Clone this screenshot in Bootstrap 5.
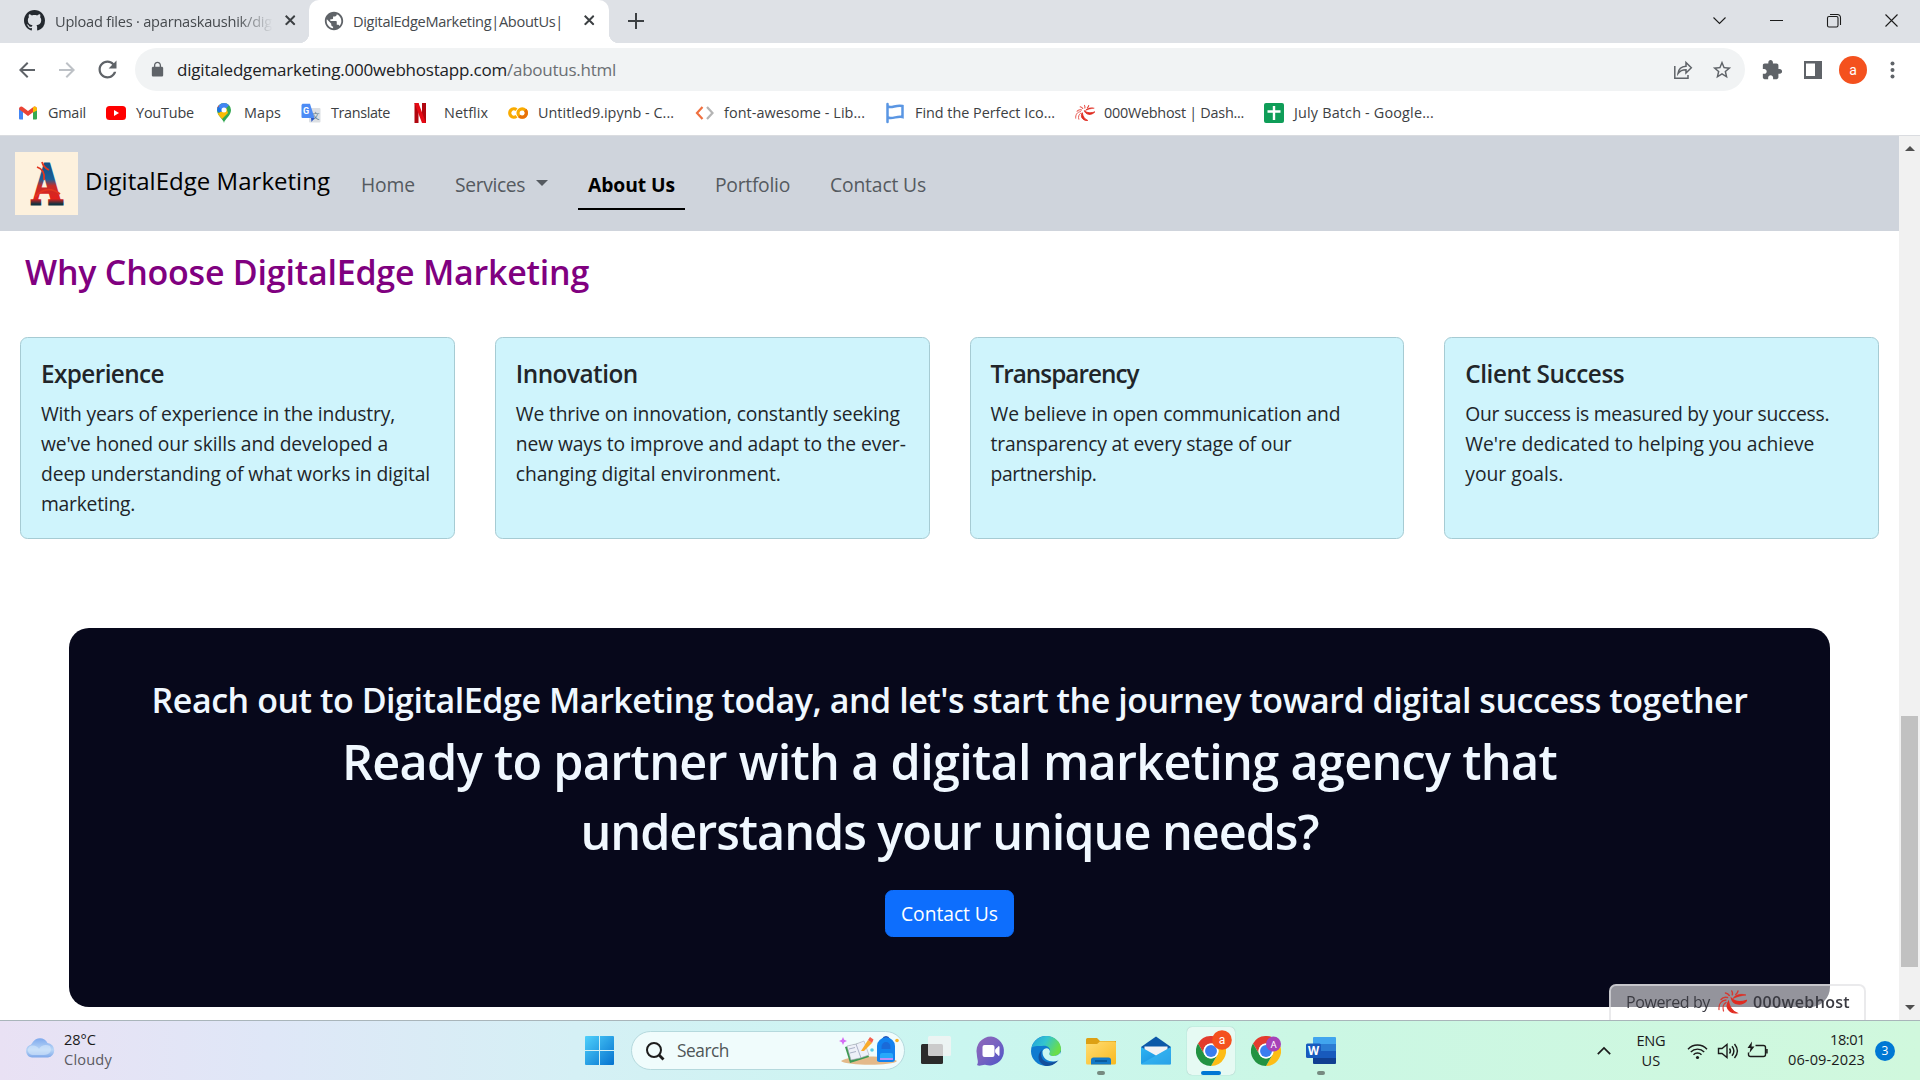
<!DOCTYPE html>
<html lang="en">
<head>
<meta charset="utf-8">
<title>DigitalEdgeMarketing|AboutUs|</title>
<link href="https://cdn.jsdelivr.net/npm/bootstrap@5.3.0/dist/css/bootstrap.min.css" rel="stylesheet">
<style>
html{height:100%;overflow:hidden}
body{height:1080px;width:1920px;font-family:"Open Sans","Noto Sans",sans-serif;font-size:19.3px;line-height:30px;color:#212529;overflow:hidden;background:#fff}
svg{display:block;flex:none;overflow:visible}
[data-fit]{display:inline-block;white-space:nowrap;flex:none}
/* browser window */
.tabstrip{height:43px;background:#dee1e6;font-size:14.6px;color:#45494d;line-height:20px}
.tabstrip>div{padding-bottom:2px}
.tab-idle{width:309px;padding-left:24px}
.tab-idle .tab-label{width:228px;padding-left:10px;-webkit-mask-image:linear-gradient(90deg,#000 84%,transparent)}
.tab-live{width:300px;background:#fff;border-radius:10px 10px 0 0;padding-left:14px;position:relative}
.tab-live::before,.tab-live::after{content:"";position:absolute;bottom:0;width:10px;height:10px}
.tab-live::before{left:-10px;background:radial-gradient(circle at 0 0,transparent 10px,#fff 10.5px)}
.tab-live::after{right:-10px;background:radial-gradient(circle at 100% 0,transparent 10px,#fff 10.5px)}
.toolbar-row{height:52px;padding:5px 0 4px 15px}
.omnibox{width:1610px;height:43px;border-radius:22px;background:#f1f3f4;font-size:17px;color:#202124;padding:0 12px 0 14px}
.bookmarks{height:41px;padding:0 0 4px 18px;border-bottom:1px solid #dadce0;gap:20px;font-size:14.4px;color:#3c4043;line-height:20px}
/* web page */
.viewport{height:884px}
.page{width:1899px;position:relative;overflow:hidden}
.site-nav{height:95px;background:#cfd4dc;padding:0 0 0 15px}
.brand-text{font-size:24px;color:#000;padding:0 21px 6px 7px;line-height:30px}
.site-nav .nav-link{padding:11px 10px 8px;border:solid transparent;border-width:2.5px 0;color:#555a60;font-size:19.3px;line-height:30px}
.site-nav .nav-link.active{border-bottom-color:#000;color:#000;font-weight:700}
.site-nav .dropdown-toggle::after{border-top-width:6px;border-left-width:6px;border-right-width:6px;margin-left:11px;vertical-align:6px}
.why{color:purple;font-size:34px;font-weight:600;line-height:42px;margin:20px 0 44px 25px}
.reasons{--bs-gutter-x:40px}
.reasons .card{height:202px;background:#cff4fc;border-color:#a6cbd3;border-radius:7.5px}
.reasons .card-body{padding:21px 20px 19px}
.reasons .card-title{font-size:24.3px;font-weight:600;line-height:30px;margin-bottom:10px}
.cta{width:1761px;height:379px;margin:89px 0 0 69px;padding-top:51px;border-radius:20px;background:#07081b;color:aliceblue}
.cta h3{font-size:34px;font-weight:600;line-height:42px;margin-bottom:5px}
.cta-big{font-size:48.6px;font-weight:600;line-height:70px}
.cta .btn{width:129px;height:47px;border-radius:7.5px;font-size:19.3px;padding:1px 0 0;margin-top:24px}
.powered{position:absolute;left:1609px;top:848px;width:257px;height:40px;border:2px solid #e0e0e2aa;border-radius:7px 7px 0 0;background:rgba(255,255,255,.57);color:#3b3b42;font-size:16px;padding:0 14px 4px 15px;filter:blur(.45px)}
.scrollbar-y{width:21px;background:#f1f1f1;padding:10px 0 10px}
.thumb{width:17px;height:252px;background:#c1c1c1;margin-top:565px;margin-bottom:38px}
/* taskbar */
.taskbar{height:60px;border-top:1px solid #a9b5ba;background:linear-gradient(90deg,#e9e1f4 0,#dfe7f7 14%,#d5f0f5 30%,#caf6f0 50%,#cbf7e4 68%,#d0f8dd 100%);font-size:14.6px;line-height:20px;color:#1b1b1b}
.weather{width:575px;padding-left:25px;gap:9px}
.two-line{padding-bottom:3px}
.dock{gap:7px}
.slot{width:48px;height:48px;position:relative;display:flex;align-items:center;justify-content:center;border-radius:5px}
.slot.current{background:#e6faf3;box-shadow:0 0 1px #8aa}
.slot .run{position:absolute;bottom:0;width:8px;height:4px;border-radius:2px;background:#768a80}
.slot.current .run{width:20px;background:#0078d4}
.find{width:274px;height:39px;border-radius:20px;background:#f0fcfc;border:1px solid #b5d9dd;font-size:17.3px;color:#4f5657;padding:0 5px 0 14px}
.notif{width:20px;height:20px;border-radius:50%;background:#0078d4;color:#fff;font-size:12px;margin-left:10px}
</style>
<script src="https://cdn.jsdelivr.net/npm/bootstrap@5.3.0/dist/js/bootstrap.bundle.min.js"></script>
</head>
<body class="d-flex flex-column">
<svg width="0" height="0" class="position-absolute">
<defs>
<symbol id="i-x" viewBox="0 0 10 10"><path d="M.7 .7 9.3 9.3M9.3 .7 .7 9.3" stroke="#3c4043" stroke-width="1.9" fill="none"/></symbol>
<symbol id="i-swirl" viewBox="0 0 29 24"><g fill="#e02b20"><path d="M13.500 8.500C15 14.500 23.500 16.500 28.800 10.300 24 12 17.500 12.500 13.500 8.500z" stroke="#e02b20" stroke-width="1.200"/><path d="M10.500 11.500C7 17 11 23.500 18.500 22.800 14.500 21 11.500 17.500 10.500 11.500z" stroke="#e02b20" stroke-width="1.200"/><path d="M15 8.500C17.500 4.500 23 3.500 28 5 23.500 5.500 19 6.500 15 8.500z" stroke="#e02b20" stroke-width=".6"/></g><g fill="none" stroke="#e02b20" stroke-linecap="round" opacity=".85"><path d="M1 19.500C.5 14.500 3 10.500 8 10" stroke-width="1.300"/><path d="M5.500 21C4.300 17.500 5.500 14 8 12.500" stroke-width="1.300"/><path d="M3 9.500C4.500 7.500 7 6.800 9.500 7.500" stroke-width="1.500"/><path d="M7.500 3C9 3.300 10.500 4.300 11.300 5.500M13.800 1C14.500 2.300 14.600 3.500 14.300 4.800M20 1C19.800 2.500 19 3.600 17.800 4.500" stroke-width="1.500"/></g></symbol>
<symbol id="i-chrome" viewBox="0 0 48 48"><path fill="#e33b2e" d="M24 12H44.800A24 24 0 0 0 3.200 12L13.600 30A12 12 0 0 1 24 12z"/><path fill="#fdbd16" d="M44.800 12A24 24 0 0 1 24 48L34.400 30A12 12 0 0 0 24 12z"/><path fill="#229342" d="M3.200 12A24 24 0 0 0 24 48L34.400 30A12 12 0 0 1 13.600 30z"/><circle cx="24" cy="24" r="12" fill="#fff"/><circle cx="24" cy="24" r="9.500" fill="#3a7df0"/></symbol>
<linearGradient id="gWin" x2="1" y2="1"><stop stop-color="#4fd0fb"/><stop offset="1" stop-color="#0572cf"/></linearGradient>
<linearGradient id="gA" x2="0" y2="1"><stop offset=".2" stop-color="#144f84"/><stop offset=".42" stop-color="#1b5f97"/><stop offset=".52" stop-color="#c52c28"/><stop offset=".72" stop-color="#e2211c"/><stop offset=".8" stop-color="#12323f"/></linearGradient>
<linearGradient id="gCloud" x2="0" y2="1"><stop stop-color="#7ea9ee"/><stop offset=".6" stop-color="#b9d6f6"/><stop offset="1" stop-color="#7fa8ea"/></linearGradient>
<linearGradient id="gChat" x2="1" y2="1"><stop stop-color="#8f66b8"/><stop offset=".45" stop-color="#7a63c0"/><stop offset="1" stop-color="#4c54c8"/></linearGradient>
<linearGradient id="gEdge" x2="1" y2=".4"><stop stop-color="#1f9fdc"/><stop offset=".5" stop-color="#33c4d0"/><stop offset="1" stop-color="#6ade49"/></linearGradient>
<linearGradient id="gFold" x2="1" y2="1"><stop stop-color="#ffdd75"/><stop offset="1" stop-color="#f9b91f"/></linearGradient>
<linearGradient id="gMail" x2="1" y2="1"><stop stop-color="#2eb5f2"/><stop offset="1" stop-color="#1587dc"/></linearGradient>
</defs>
</svg>

<header>
<div class="tabstrip d-flex">
  <div class="tab-idle d-flex align-items-center">
    <svg width="21" height="21" viewBox="0 0 16 16" fill="#24292f"><path d="M8 0C3.580 0 0 3.580 0 8c0 3.540 2.290 6.530 5.470 7.590.4.070.55-.17.55-.38 0-.19-.01-.82-.01-1.490-2.010.37-2.530-.49-2.690-.94-.09-.23-.48-.94-.82-1.130-.28-.15-.68-.52-.01-.53.63-.01 1.080.58 1.230.82.72 1.210 1.870.87 2.330.66.07-.52.28-.87.51-1.070-1.780-.2-3.640-.89-3.640-3.950 0-.87.31-1.590.82-2.150-.08-.2-.36-1.020.08-2.120 0 0 .67-.21 2.200.82.64-.18 1.320-.27 2-.27s1.360.09 2 .27c1.530-1.040 2.200-.82 2.200-.82.44 1.100.16 1.920.08 2.120.51.56.82 1.270.82 2.150 0 3.070-1.870 3.750-3.650 3.950.29.25.54.73.54 1.480 0 1.070-.01 1.930-.01 2.200 0 .21.15.46.55.38A8.010 8.010 0 0 0 16 8c0-4.420-3.580-8-8-8"/></svg>
    <div class="tab-label"><span data-fit="217">Upload files · aparnaskaushik/dig</span></div>
    <svg style="margin-left:12px" width="10.500" height="10.500"><use href="#i-x"/></svg>
  </div>
  <div class="tab-live d-flex align-items-center">
    <svg width="22" height="22" viewBox="0 0 24 24" fill="#5f6368"><path d="M12 2C6.480 2 2 6.480 2 12s4.480 10 10 10 10-4.480 10-10S17.520 2 12 2zm-1 17.930c-3.950-.49-7-3.850-7-7.930 0-.62.08-1.210.21-1.790L9 15v1c0 1.100.9 2 2 2v1.930zm6.900-2.540c-.26-.81-1-1.390-1.900-1.390h-1v-3c0-.55-.45-1-1-1H8v-2h2c.55 0 1-.45 1-1V7h2c1.100 0 2-.9 2-2v-.41c2.930 1.190 5 4.060 5 7.410 0 2.080-.8 3.970-2.100 5.390z"/></svg>
    <span class="ms-2" data-fit="210">DigitalEdgeMarketing|AboutUs|</span>
    <svg class="ms-auto" style="margin-right:15px" width="10.500" height="10.500"><use href="#i-x"/></svg>
  </div>
  <div class="d-flex flex-grow-1 align-items-center ps-3" style="padding-right:22px">
    <svg style="margin-left:3px" width="16" height="16" viewBox="0 0 16 16" stroke="#3c4043" stroke-width="2"><path d="M8 0v16M0 8h16"/></svg>
    <svg class="ms-auto" width="185" height="14" viewBox="0 0 185 14" fill="none" stroke="#1c1c1c" stroke-width="1.100"><path d="M.5 3.500 6.500 9.500 12.500 3.500M57 6.500h13"/><rect x="114.500" y="2.500" width="10.500" height="10.500" rx="1.500"/><path d="M117 .5h7.500a3 3 0 0 1 3 3V11M172.500 .5l12 12M184.500 .5l-12 12"/></svg>
  </div>
</div>
<div class="toolbar-row d-flex align-items-center">
  <svg width="24" height="24" viewBox="0 0 24 24" fill="#5f6368"><path d="M20 11H7.830l5.590-5.590L12 4l-8 8 8 8 1.410-1.410L7.830 13H20v-2z"/></svg>
  <svg style="margin-left:16px" width="24" height="24" viewBox="0 0 24 24" fill="#bdc1c6"><path transform="matrix(-1 0 0 1 24 0)" d="M20 11H7.830l5.590-5.590L12 4l-8 8 8 8 1.410-1.410L7.830 13H20v-2z"/></svg>
  <svg style="margin:0 14px 0 15px" width="27" height="27" viewBox="0 0 24 24" fill="#5f6368"><path d="M17.650 6.350C16.200 4.900 14.210 4 12 4c-4.420 0-7.990 3.580-7.990 8s3.570 8 7.990 8c3.730 0 6.840-2.550 7.730-6h-2.080c-.82 2.330-3.040 4-5.650 4-3.310 0-6-2.690-6-6s2.690-6 6-6c1.660 0 3.140.69 4.220 1.780L13 11h7V4l-2.350 2.350z"/></svg>
  <div class="omnibox d-flex align-items-center">
    <svg width="17" height="17" viewBox="0 0 24 24" fill="#5f6368"><path d="M18 8h-1V6c0-2.760-2.240-5-5-5S7 3.240 7 6v2H6c-1.100 0-2 .9-2 2v10c0 1.100.9 2 2 2h12c1.100 0 2-.9 2-2V10c0-1.100-.9-2-2-2zm-2.900 0H8.900V6c0-1.710 1.390-3.100 3.100-3.100s3.100 1.390 3.100 3.100z"/></svg>
    <span style="margin-left:11px" data-fit="330">digitaledgemarketing.000webhostapp.com</span><span data-fit="109" style="color:#6b6f73">/aboutus.html</span>
    <svg class="ms-auto" width="18" height="18" viewBox="0 0 18 18" fill="none" stroke="#5f6368" stroke-width="1.500"><path d="M.8 5V17.200H14V14"/><path d="M4 12.500C4.500 8 7 5.500 12 5.200V1.500L17.300 6.800 12 12V8.800C8.500 8.800 6 9.800 4 12.500z"/></svg>
    <svg style="margin-left:19px" width="22" height="22" viewBox="0 0 24 24" fill="#5f6368"><path d="M22 9.240l-7.190-.62L12 2 9.190 8.630 2 9.240l5.460 4.730L5.820 21 12 17.270 18.180 21l-1.630-7.030L22 9.240zM12 15.400l-3.760 2.270 1-4.280-3.320-2.880 4.380-.38L12 6.100l1.710 4.040 4.380.38-3.320 2.880 1 4.280L12 15.400z"/></svg>
  </div>
  <svg style="margin-left:16px" width="22" height="22" viewBox="0 0 24 24" fill="#5f6368"><path d="M20.500 11H19V7c0-1.100-.9-2-2-2h-4V3.500C13 2.120 11.880 1 10.500 1S8 2.120 8 3.500V5H4c-1.100 0-1.990.9-1.990 2v3.800H3.500c1.490 0 2.700 1.210 2.700 2.700s-1.210 2.700-2.700 2.700H2V20c0 1.100.9 2 2 2h3.800v-1.500c0-1.490 1.210-2.700 2.700-2.700s2.700 1.210 2.700 2.700V22H17c1.100 0 2-.9 2-2v-4h1.500c1.380 0 2.500-1.120 2.500-2.500S21.880 11 20.500 11z"/></svg>
  <svg style="margin-left:21px" width="18" height="18" viewBox="0 0 18 18"><path fill="#5f6368" fill-rule="evenodd" d="M0 0h18v18H0zM2 2.500h9v12.500H2z"/></svg>
  <svg style="margin-left:17px" width="28" height="28" viewBox="0 0 28 28"><circle cx="14" cy="14" r="14" fill="#f4511e"/><text x="14" y="18.500" font-family="Roboto" font-size="14" fill="#fff" text-anchor="middle">a</text></svg>
  <svg style="margin-left:23px" width="5" height="18" fill="#5f6368"><circle cx="2.500" cy="2.500" r="2"/><circle cx="2.500" cy="9" r="2"/><circle cx="2.500" cy="15.500" r="2"/></svg>
</div>
<nav class="bookmarks d-flex align-items-center">
  <div class="d-flex align-items-center" style="gap:10px"><svg width="20" height="20" viewBox="0 0 20 20"><path fill="#4285f4" d="M1 5.500v10a1 1 0 0 0 1 1h3V8z"/><path fill="#34a853" d="M15 16.500h3a1 1 0 0 0 1-1v-10L15 8z"/><path fill="#ea4335" d="M1 6.200C1 3.500 3.500 3 5 4.200L10 8l5-3.800c1.500-1.200 4-.7 4 2L10 13z"/><path fill="#fbbc04" d="M15 4.200c1.500-1.200 4-.7 4 2V7.500L15 9.500z"/></svg><span data-fit="38">Gmail</span></div>
  <div class="d-flex align-items-center" style="gap:10px"><svg width="20" height="20"><rect y="3" width="20" height="14" rx="3.500" fill="#f00"/><path d="M8 7v6l5-3z" fill="#fff"/></svg><span data-fit="58">YouTube</span></div>
  <div class="d-flex align-items-center" style="gap:10px"><svg width="20" height="20" viewBox="0 0 20 20"><path fill="#34a853" d="M10 20C9.500 16 3 13 3 7a7 7 0 0 1 14 0c0 6-6.500 9-7 13z"/><path fill="#fbbc04" d="M3.800 10.500 12 4l2 6-6 6C6.500 14 4.700 12.500 3.800 10.500z"/><path fill="#ea4335" d="M3.300 5 7 8 10 4 5 2C4.200 2.800 3.500 4 3.300 5z"/><path fill="#4285f4" d="M5 2.200A7 7 0 0 1 15 2.200L8.500 9 4 8z"/><path fill="#1a73e8" d="M4 3.500 8 7 5.500 9.800 3.200 8C2.900 6.500 3.200 4.800 4 3.500z"/><circle cx="10" cy="7" r="2.500" fill="#fff"/></svg><span data-fit="37">Maps</span></div>
  <div class="d-flex align-items-center" style="gap:10px"><svg width="20" height="20"><rect x="8" y="5" width="11.500" height="14.500" rx="1" fill="#dcdfe3"/><text x="10.500" y="16" font-family="Noto Sans CJK SC" font-size="8" fill="#607d8b">文</text><path d="M1.500 .8H9L13.500 15H1.500A1 1 0 0 1 .5 14V2z" fill="#4c8bf5"/><path d="M10 15h3.500L10.500 19z" fill="#2a56c6"/><text x="2" y="11" font-family="Roboto" font-weight="700" font-size="9" fill="#fff">G</text></svg><span data-fit="59">Translate</span></div>
  <div class="d-flex align-items-center" style="gap:14px"><svg width="20" height="20"><path d="M4.500 0h4v20h-4zM12 0h4v20h-4z" fill="#b1060f"/><path d="M4.500 0h4L16 20h-4z" fill="#e50914"/></svg><span data-fit="44">Netflix</span></div>
  <div class="d-flex align-items-center" style="gap:10px"><svg width="20" height="20" fill="none" stroke-width="3.200"><path d="M8.500 6.700A4.200 4.200 0 1 0 8.500 13.300" stroke="#f9ab00"/><circle cx="14.200" cy="10" r="4.200" stroke="#f9ab00"/><path d="M11.200 13A4.200 4.200 0 0 0 17.200 7" stroke="#e8710a"/></svg><span class="me-1" data-fit="136" style="width:133px">Untitled9.ipynb - C...</span></div>
  <div class="d-flex align-items-center" style="gap:9px"><svg width="20" height="20" fill="none" stroke-width="2.200"><path d="M7.500 4 2 10 7.500 16" stroke="#f0703f"/><path d="M12 4 17.500 10 12 16" stroke="#b4b4b4"/></svg><span data-fit="141">font-awesome - Lib...</span></div>
  <div class="d-flex align-items-center" style="gap:10px"><svg width="20" height="20" fill="none" stroke="#5a96e3" stroke-width="2.500"><path d="M2.500 1v18" stroke-linecap="round"/><path d="M2.500 3.500C7 5.500 11 1.500 17.500 3V14C12 12.500 8 16.500 2.500 14.500"/></svg><span data-fit="140">Find the Perfect Ico...</span></div>
  <div class="d-flex align-items-center" style="gap:9px"><svg width="20" height="18"><use href="#i-swirl"/></svg><span data-fit="140">000Webhost | Dash...</span></div>
  <div class="d-flex align-items-center" style="gap:10px"><svg width="20" height="20"><rect width="20" height="20" rx="2" fill="#0f9d58"/><path d="M10 3v14M3.500 8.500h13" stroke="#fff" stroke-width="2.400"/></svg><span data-fit="140">July Batch - Google...</span></div>
</nav>
</header>

<div class="viewport d-flex">
<main class="page">
  <nav class="site-nav d-flex align-items-center">
    <svg width="63" height="63" viewBox="0 0 63 63"><rect width="63" height="63" fill="#fdf1dd"/><text x="17" y="52" font-family="DejaVu Serif" font-weight="700" font-size="55" textLength="30" lengthAdjust="spacingAndGlyphs" fill="url(#gA)" stroke="url(#gA)" stroke-width="3">A</text><path d="M22 15c6 2 8 7 7 13M27 10c1 4 3 6 7 8M20 45c8-9 17-9 25-3" stroke="#e2361f" stroke-width="1.800" fill="none"/></svg>
    <a class="brand-text text-decoration-none"><span data-fit="245">DigitalEdge Marketing</span></a>
    <ul class="nav flex-nowrap" style="gap:20px">
      <li class="nav-item"><a class="nav-link"><span data-fit="54">Home</span></a></li>
      <li class="nav-item"><a class="nav-link dropdown-toggle"><span data-fit="70">Services</span></a></li>
      <li class="nav-item"><a class="nav-link active"><span data-fit="87">About Us</span></a></li>
      <li class="nav-item"><a class="nav-link"><span data-fit="75">Portfolio</span></a></li>
      <li class="nav-item"><a class="nav-link"><span data-fit="96">Contact Us</span></a></li>
    </ul>
  </nav>
  <h3 class="why"><span data-fit="564">Why Choose DigitalEdge Marketing</span></h3>
  <div class="row reasons mx-0">
    <div class="col-3"><div class="card"><div class="card-body"><h5 class="card-title"><span data-fit="123">Experience</span></h5><p class="card-text"><span data-fit="354">With years of experience in the industry,</span><br><span data-fit="347">we've honed our skills and developed a</span><br><span data-fit="389">deep understanding of what works in digital</span><br><span data-fit="94">marketing.</span></p></div></div></div>
    <div class="col-3"><div class="card"><div class="card-body"><h5 class="card-title"><span data-fit="122">Innovation</span></h5><p class="card-text"><span data-fit="384">We thrive on innovation, constantly seeking</span><br><span data-fit="390">new ways to improve and adapt to the ever-</span><br><span data-fit="265">changing digital environment.</span></p></div></div></div>
    <div class="col-3"><div class="card"><div class="card-body"><h5 class="card-title"><span data-fit="148">Transparency</span></h5><p class="card-text"><span data-fit="350">We believe in open communication and</span><br><span data-fit="301">transparency at every stage of our</span><br><span data-fit="106">partnership.</span></p></div></div></div>
    <div class="col-3"><div class="card"><div class="card-body"><h5 class="card-title"><span data-fit="159">Client Success</span></h5><p class="card-text"><span data-fit="364">Our success is measured by your success.</span><br><span data-fit="349">We're dedicated to helping you achieve</span><br><span data-fit="98">your goals.</span></p></div></div></div>
  </div>
  <section class="cta text-center">
    <h3><span data-fit="1596">Reach out to DigitalEdge Marketing today, and let's start the journey toward digital success together</span></h3>
    <div class="cta-big"><span data-fit="1215">Ready to partner with a digital marketing agency that</span><br><span data-fit="738">understands your unique needs?</span></div>
    <a class="btn btn-primary d-inline-flex align-items-center justify-content-center"><span data-fit="97">Contact Us</span></a>
  </section>
  <div class="powered d-flex align-items-center"><span data-fit="84">Powered by</span><svg class="ms-2" width="29" height="24"><use href="#i-swirl"/></svg><span class="ms-auto fw-semibold" data-fit="97">000webhost</span></div>
</main>
<div class="scrollbar-y d-flex flex-column align-items-center">
  <svg width="10" height="5" fill="#505050"><path d="M0 5 5 0l5 5z"/></svg>
  <div class="thumb"></div>
  <svg width="10" height="5" fill="#505050"><path d="M0 0l5 5 5-5z"/></svg>
</div>
</div>

<footer class="taskbar d-flex align-items-center">
  <div class="weather d-flex align-items-center">
    <svg width="30" height="20" viewBox="0 0 30 20" style="margin-bottom:6px"><path fill="url(#gCloud)" d="M7 19.500A6.500 6.500 0 0 1 4.500 7.300C6 7 6.500 6 7.500 4.500 11-1.500 20-1 22.500 5A7.300 7.300 0 0 1 23 19.500z"/><path fill="#d6e8fb" opacity=".6" d="M5 8c5-1.500 8 1 9 3 2-4 7-5 11-3 3 6-2 9-6 9H8C3 17 1 11 5 8z"/></svg>
    <div style="padding-bottom:4px"><div><span data-fit="32">28°C</span></div><div style="color:#5a5a62"><span data-fit="48">Cloudy</span></div></div>
  </div>
  <div class="dock d-flex align-items-center">
    <div class="slot"><svg width="29" height="29" viewBox="0 0 29 29" fill="url(#gWin)"><path d="M1 0h13v14H0V1a1 1 0 0 1 1-1zM15 0h13a1 1 0 0 1 1 1v13H15zM0 15h14v14H1a1 1 0 0 1-1-1zM15 15h14v13a1 1 0 0 1-1 1H15z"/></svg></div>
    <div class="find d-flex align-items-center" style="margin-left:1px"><svg width="18" height="18" viewBox="0 0 18 18" fill="none" stroke="#1d1d1d" stroke-width="2"><circle cx="8" cy="8" r="7"/><path d="M12.800 12.800 17.500 17.500" stroke-width="2.800"/></svg><span style="margin-left:13px" data-fit="52">Search</span>
      <svg class="ms-auto" width="60" height="32" viewBox="0 0 60 32"><path d="M2 26C10 20 50 20 58 26 54 31 8 31 2 26z" fill="#e3b98a"/><path d="M6 12 24 7l6 15-19 6z" fill="#3d9a52"/><path d="M8 11 17 9l8-3 5 14-9 3-9 2z" fill="#edf0f8" stroke="#aab" stroke-width=".6"/><path d="M17 9l5 14M10 14l6-1.500M11 18l6-1.500" stroke="#9ba3bb" fill="none" stroke-width=".8"/><path d="M22 16 29 5l4 3-8 8z" fill="#f9ab2c"/><path d="M29 5l2-3 3.500 2.500L33 8z" fill="#f4604f"/><path d="M4 2l1.200 2.800L8 6 5.200 7.200 4 10 2.800 7.200 0 6l2.800-1.200z" fill="#d56df5"/><circle cx="33" cy="15" r="1.800" fill="#56cbe3"/><circle cx="58" cy="5.500" r="1.800" fill="#f8b21f"/><path d="M44 4a3.200 3.200 0 0 1 6 0" stroke="#1d4fb5" stroke-width="1.800" fill="none"/><path d="M38 26V11a9 8.500 0 0 1 18 0v13a3 3 0 0 1-3 3H40z" fill="#1282ee"/><path d="M42.500 12a4.500 5 0 0 1 9 0v2h-9z" fill="#1a6ad8"/><rect x="41" y="18" width="13" height="7" rx="2" fill="#27a8fa"/><path d="M41 24h13" stroke="#e38af5" stroke-width="1.600"/></svg></div>
    <div class="slot"><svg width="30" height="29" viewBox="0 0 30 29"><rect y="8" width="22" height="20" rx="1.500" fill="#2b2b2b"/><rect x="7" width="23" height="20" rx="1.500" fill="#f4f4f4" opacity=".8"/></svg></div>
    <div class="slot"><svg width="30" height="30" viewBox="0 0 30 30"><path d="M15 .5A14.500 14.500 0 1 1 10 29C7 28 4 31 1 29 3 26 1 23 .8 18A14.500 14.500 0 0 1 15 .5z" fill="url(#gChat)"/><rect x="6.500" y="9" width="12" height="12" rx="2" fill="#fff"/><path d="M19.700 13.500 23 10.500v9l-3.300-3z" fill="#fff" stroke="#fff"/></svg></div>
    <div class="slot"><svg width="30" height="30" viewBox="0 0 30 30"><circle cx="15" cy="15" r="15" fill="#0f7bd0"/><path d="M.5 12C2 5 8 0 15 0c9 0 15 6 15 13 0 5-4 7-7.500 7-4 0-5-2-3.500-4 1-4-3-7-8-6C6 10 2 10 .5 12z" fill="url(#gEdge)"/><path d="M11 14c-4 10 6 16 16.500 10C24 29 19 30 15 30 7 28 5 19 11 14z" fill="#124f9c"/><path d="M19 16c-1.500 2-.5 4 3.500 4 3 0 6-1.500 7-4l1 5-3.500 3.500C22 27 11 25 11.500 15.500 13 11 19 11 19 16z" fill="#c9f7f2"/></svg></div>
    <div class="slot"><svg width="30" height="29" viewBox="0 0 30 29"><path d="M0 3.500A1.500 1.500 0 0 1 1.500 2H11l3 3h16v6H0z" fill="#dda014"/><path d="M0 8h11l3-2.500h14.500A1.500 1.500 0 0 1 30 7v20a1.500 1.500 0 0 1-1.500 1.500h-27A1.500 1.500 0 0 1 0 27z" fill="url(#gFold)"/><path d="M5 28.500V24a2.500 2.500 0 0 1 2.500-2.500h15A2.500 2.500 0 0 1 25 24v4.500z" fill="#1379c7"/><path d="M9 25h12" stroke="#0a4f8c" stroke-width="1.400"/></svg><i class="run"></i></div>
    <div class="slot"><svg width="30" height="29" viewBox="0 0 30 29"><path d="M0 11 15 .5 30 11v4H0z" fill="#0c58a8"/><path d="M3.500 10.500h23V14L15 22 3.500 14z" fill="#f2f2f5"/><path d="M0 11 15 19.500 30 11v16.500a1 1 0 0 1-1 1H1a1 1 0 0 1-1-1z" fill="url(#gMail)"/><path d="M0 28 15 19.500 30 11v16.500a1 1 0 0 1-1 1H1z" fill="#45c4f7" opacity=".45"/></svg></div>
    <div class="slot current"><svg width="30" height="30" viewBox="0 0 30 30"><use href="#i-chrome" width="30" height="30"/><circle cx="26" cy="4" r="9.800" fill="#f4511e"/><text x="26" y="8" text-anchor="middle" font-family="Roboto" font-size="12" fill="#fff">a</text></svg><i class="run"></i></div>
    <div class="slot"><svg width="30" height="30" viewBox="0 0 30 30"><use href="#i-chrome" width="30" height="30"/><circle cx="22.500" cy="8" r="7.500" fill="#a742b8"/><text x="22.500" y="11.500" text-anchor="middle" font-family="Roboto" font-size="9.500" fill="#fff">A</text></svg></div>
    <div class="slot"><svg width="30" height="29" viewBox="0 0 30 29"><path d="M8 1h21a1 1 0 0 1 1 1v6H7V2a1 1 0 0 1 1-1z" fill="#41a5ee"/><path d="M7 8h23v7H7z" fill="#2b7cd3"/><path d="M7 15h23v7H7z" fill="#185abd"/><path d="M7 22h23v5a1 1 0 0 1-1 1H8a1 1 0 0 1-1-1z" fill="#103f91"/><rect y="7.500" width="15" height="14.500" rx="1.500" fill="#185abd"/><text x="7.500" y="19" text-anchor="middle" font-family="Open Sans" font-weight="700" font-size="11.500" fill="#fff">W</text></svg><i class="run"></i></div>
  </div>
  <div class="d-flex align-items-center ms-auto" style="padding-right:25px">
    <svg width="14" height="8" fill="none" stroke="#1b1b1b" stroke-width="1.700"><path d="M.8 7.200 7 1l6.200 6.200"/></svg>
    <div class="text-center" style="width:80px;padding-bottom:2px"><div><span data-fit="29">ENG</span></div><div><span data-fit="19">US</span></div></div>
    <svg style="margin-left:-4px;margin-right:1px" width="82" height="20" viewBox="0 0 82 20" fill="none" stroke="#1b1b1b" stroke-width="1.400"><path d="M1 8.200a13 13 0 0 1 19 0M3.800 11a9.300 9.300 0 0 1 13.400 0M6.500 13.700a5.600 5.600 0 0 1 8 0"/><circle cx="10.500" cy="16.500" r="1.600" fill="#1b1b1b" stroke="none"/><path d="M31.500 7.500h3.500L40 3.500v13L35 12.500h-3.500zM42.500 7.500q2 2.500 0 5M45 5.200q3.800 4.800 0 9.600M47.500 3q5.800 7 0 14"/><path d="M68.500 4.500H76.500a2 2 0 0 1 2 2v7a2 2 0 0 1-2 2H63.500a2 2 0 0 1-2-2V11.500M80 8v4.500"/><path d="M65 .5 60.500 7h3l-1 5L67.500 5.500h-3z" fill="#1b1b1b" stroke="none"/></svg>
    <div class="text-end two-line" style="width:95px"><div><span data-fit="35">18:01</span></div><div><span data-fit="77">06-09-2023</span></div></div>
    <div class="notif d-flex align-items-center justify-content-center">3</div>
  </div>
</footer>
<script>
// Tune tracking so each label fills its measured width (px) whichever humanist sans is installed.
document.querySelectorAll('[data-fit]').forEach(function (el) {
  var box = document.createRange();
  box.selectNodeContents(el);
  var gap = (+el.dataset.fit - box.getBoundingClientRect().width) / el.textContent.length;
  el.style.letterSpacing = gap.toFixed(3) + 'px';
});
</script>
</body>
</html>
